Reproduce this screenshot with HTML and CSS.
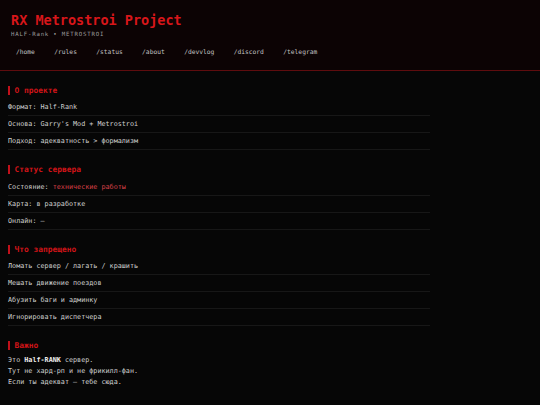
FILE: index.html
```html
<!DOCTYPE html>
<html lang="ru">
<head>
<meta charset="utf-8">
<title>RX Metrostroi Project</title>
<link rel="stylesheet" href="styles.css">
</head>
<body>
<header class="site-header">
  <h1 class="title">RX Metrostroi Project</h1>
  <div class="subtitle">HALF-Rank • METROSTROI</div>
  <nav class="nav">
    <a href="#">/home</a>
    <a href="#">/rules</a>
    <a href="#">/status</a>
    <a href="#">/about</a>
    <a href="#">/devvlog</a>
    <a href="#">/discord</a>
    <a href="#">/telegram</a>
  </nav>
</header>
<main class="main">
  <section class="section">
    <h2 class="heading">О проекте</h2>
    <div class="row">Формат: Half-Rank</div>
    <div class="row">Основа: Garry's Mod + Metrostroi</div>
    <div class="row">Подход: адекватность &gt; формализм</div>
  </section>
  <section class="section">
    <h2 class="heading">Статус сервера</h2>
    <div class="row">Состояние: <span class="warn">технические работы</span></div>
    <div class="row">Карта: в разработке</div>
    <div class="row">Онлайн: —</div>
  </section>
  <section class="section">
    <h2 class="heading">Что запрещено</h2>
    <div class="row">Ломать сервер / лагать / крашить</div>
    <div class="row">Мешать движение поездов</div>
    <div class="row">Абузить баги и админку</div>
    <div class="row">Игнорировать диспетчера</div>
  </section>
  <section class="section">
    <h2 class="heading">Важно</h2>
    <p class="note">Это <b>Half-RANK</b> сервер.<br>Тут не хард-рп и не фрикилл-фан.<br>Если ты адекват — тебе сюда.</p>
  </section>
</main>
</body>
</html>
```
FILE: styles.css
```css
html, body {
  margin: 0;
  padding: 0;
}
body {
  background: #060606;
  color: #cfcfcf;
  font-family: "DejaVu Sans Mono", monospace;
  font-size: 6.76px;
  height: 405px;
}
.site-header {
  background: #0c0304;
  border-bottom: 1px solid #5e0c0e;
  padding: 12px 11px 10.7px;
}
.title {
  margin: 0;
  color: #d8161a;
  font-size: 13.5px;
  line-height: 16px;
  font-weight: bold;
}
.subtitle {
  margin-top: 3px;
  color: #9c9c9c;
  font-size: 5.7px;
  line-height: 7px;
  letter-spacing: 0.81px;
}
.nav {
  display: flex;
  gap: 9.4px;
  margin-top: 6.1px;
}
.nav a {
  color: #c4c4c4;
  text-decoration: none;
  font-size: 6.28px;
  line-height: 7.2px;
  padding: 4px 5px;
}
.main {
  padding: 15px 8px;
  width: 422px;
  display: flex;
  flex-direction: column;
  gap: 15px;
}
.heading {
  margin: 0 0 4.5px;
  color: #d01418;
  font-size: 7.9px;
  line-height: 9px;
  font-weight: bold;
  border-left: 2.2px solid #c0101a;
  padding-left: 4.4px;
}
.row {
  padding: 4px 0;
  line-height: 8px;
  border-bottom: 1px solid #171717;
}
.warn {
  color: #d84046;
}
.note {
  margin: 0;
  line-height: 11.2px;
}
.note b {
  color: #f2f2f2;
}
```
